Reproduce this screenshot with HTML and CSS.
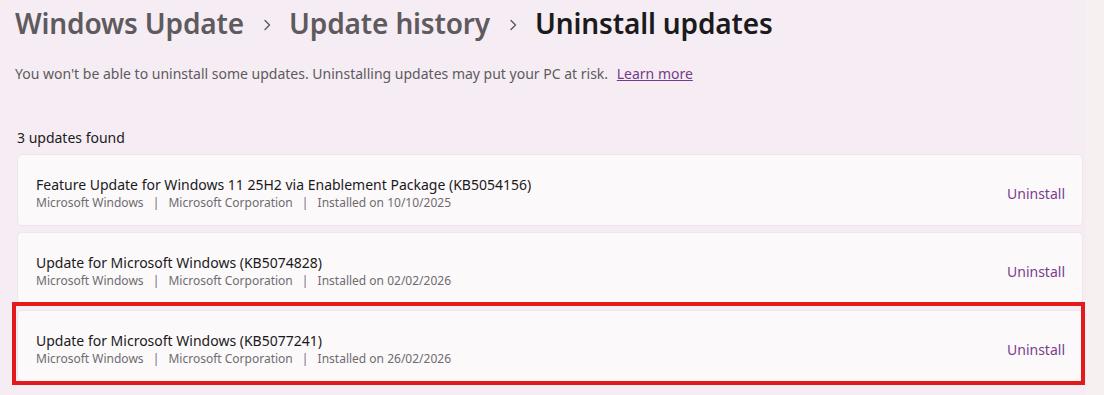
FILE: index.html
```html
<!DOCTYPE html>
<html lang="en">
<head>
    <meta charset="UTF-8">
    <title>Uninstall updates</title>
    <link rel="stylesheet" href="styles.css">
</head>
<body>
    <div class="page">
        <div class="breadcrumb">
            <span class="crumb">Windows Update</span>
            <svg class="chevron" viewBox="0 0 8 12" width="8" height="12"><path d="M2 1.5 L6.5 6 L2 10.5" fill="none" stroke="#5c595c" stroke-width="1.4" stroke-linecap="round" stroke-linejoin="round"/></svg>
            <span class="crumb">Update history</span>
            <svg class="chevron" viewBox="0 0 8 12" width="8" height="12"><path d="M2 1.5 L6.5 6 L2 10.5" fill="none" stroke="#5c595c" stroke-width="1.4" stroke-linecap="round" stroke-linejoin="round"/></svg>
            <span class="crumb current">Uninstall updates</span>
        </div>

        <p class="warning">You won't be able to uninstall some updates. Uninstalling updates may put your PC at risk. <a href="#" class="learn">Learn more</a></p>

        <div class="count">3 updates found</div>

        <div class="list">
            <div class="update">
                <div class="update-text">
                    <div class="update-name">Feature Update for Windows 11 25H2 via Enablement Package (KB5054156)</div>
                    <div class="update-meta">Microsoft Windows <span class="sep">|</span> Microsoft Corporation <span class="sep">|</span> Installed on 10/10/2025</div>
                </div>
                <a href="#" class="uninstall">Uninstall</a>
            </div>
            <div class="update">
                <div class="update-text">
                    <div class="update-name">Update for Microsoft Windows (KB5074828)</div>
                    <div class="update-meta">Microsoft Windows <span class="sep">|</span> Microsoft Corporation <span class="sep">|</span> Installed on 02/02/2026</div>
                </div>
                <a href="#" class="uninstall">Uninstall</a>
            </div>
            <div class="update marked">
                <div class="update-text">
                    <div class="update-name">Update for Microsoft Windows (KB5077241)</div>
                    <div class="update-meta">Microsoft Windows <span class="sep">|</span> Microsoft Corporation <span class="sep">|</span> Installed on 26/02/2026</div>
                </div>
                <a href="#" class="uninstall">Uninstall</a>
                <div class="highlight"></div>
            </div>
        </div>
    </div>
</body>
</html>
```

FILE: styles.css
```css
body {
    margin: 0;
    font-family: 'Noto Sans', 'Open Sans', sans-serif;
    background-color: #f7f0f1;
    color: #1b1a1b;
    height: 395px;
    overflow: hidden;
}

.page {
    width: 1086px;
    height: 395px;
    padding: 0 3px 0 15px;
    box-sizing: border-box;
    background-color: #f5edf3;
}

.breadcrumb {
    display: flex;
    align-items: center;
    height: 46px;
    padding-bottom: 2px;
}

.crumb {
    font-size: 28px;
    font-weight: 600;
    color: #5e5a5e;
    letter-spacing: -0.15px;
}

.crumb.current {
    color: #1c1b1c;
}

.chevron {
    margin: 4px 18px 0 19px;
}

.warning {
    margin: 16px 0 0 0;
    font-size: 14px;
    color: #5e5a5e;
    line-height: 20px;
}

.learn {
    color: #773b8c;
    margin-left: 5px;
}

.count {
    margin: 44px 0 0 2px;
    font-size: 14px;
    line-height: 20px;
}

.list {
    margin-top: 6px;
    display: flex;
    flex-direction: column;
    gap: 6px;
}

.update {
    position: relative;
    display: flex;
    align-items: center;
    justify-content: space-between;
    height: 72px;
    margin-left: 2px;
    padding: 0 17px 0 18px;
    background-color: #fcf9fb;
    border: 1px solid #ede6ea;
    border-radius: 5px;
    box-sizing: border-box;
}

.update-text {
    margin-top: 5px;
}

.update-name {
    font-size: 14px;
    line-height: 19px;
    color: #1b1a1b;
}

.update-meta {
    font-size: 12px;
    line-height: 17px;
    color: #6f6b6f;
}

.sep {
    margin: 0 6px;
    color: #6f6b6f;
}

.uninstall {
    font-size: 14px;
    color: #7a3d8d;
    text-decoration: none;
    margin-top: 7px;
}

.highlight {
    position: absolute;
    top: -9px;
    bottom: -4px;
    left: -6px;
    right: -3px;
    border: 4px solid #e3191c;
    pointer-events: none;
}
```
